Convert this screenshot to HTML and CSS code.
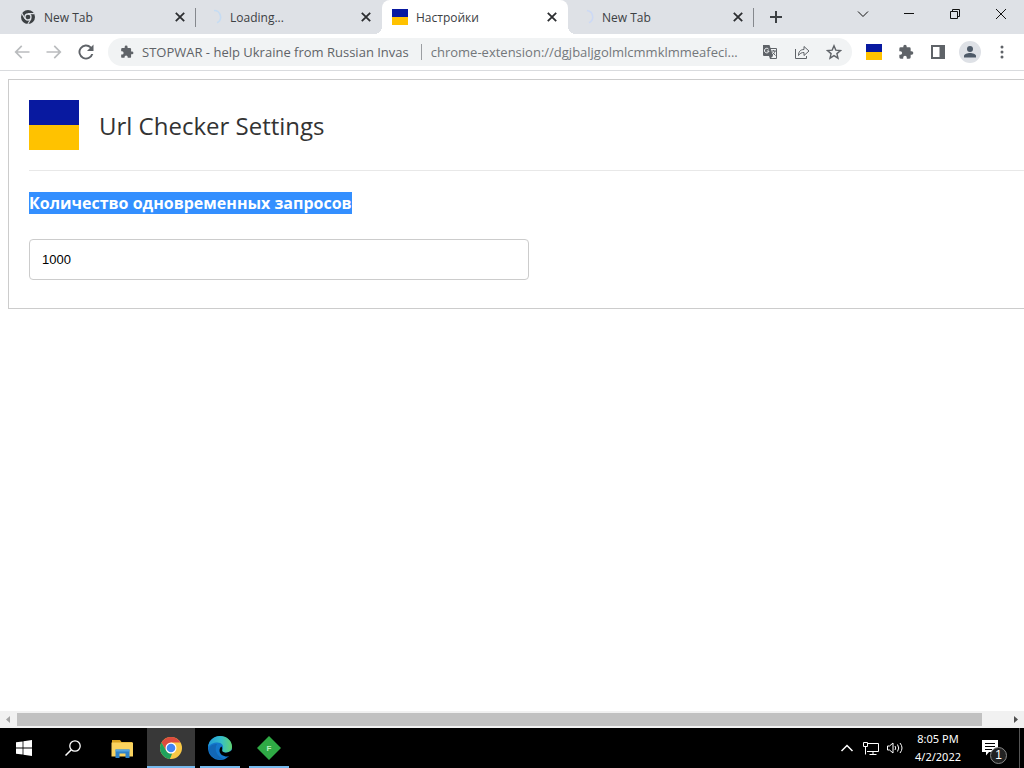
FILE: index.html
```html
<!DOCTYPE html>
<html lang="ru">
<head>
    <meta charset="utf-8">
    <title>Настройки</title>
    <link rel="stylesheet" href="styles.css">
</head>
<body>
    <header class="tabs">
        <div class="tab">
            <svg class="favicon" viewBox="0 0 16 16"><circle cx="8" cy="8" r="7" fill="#3c4043"/><circle cx="8" cy="8" r="3" fill="none" stroke="#dee1e6" stroke-width="1.3"/><path d="M8 4.6h6.4M5 9.6L1.8 4.2M11 9.7L7.8 15" stroke="#dee1e6" stroke-width="1.1"/></svg>
            <span class="tab-title">New Tab</span>
            <button class="close" aria-label="Close"><svg viewBox="0 0 10 10"><path d="M1.5 1.5l7 7M8.5 1.5l-7 7"/></svg></button>
        </div>
        <div class="tab">
            <svg class="favicon" viewBox="0 0 16 16"><path d="M8 1.5a6.5 6.5 0 0 1 3 12.3" fill="none" stroke="#c6dcf3" stroke-width="1.6"/></svg>
            <span class="tab-title">Loading...</span>
            <button class="close" aria-label="Close"><svg viewBox="0 0 10 10"><path d="M1.5 1.5l7 7M8.5 1.5l-7 7"/></svg></button>
        </div>
        <div class="tab active">
            <span class="flag flag-small"></span>
            <span class="tab-title">Настройки</span>
            <button class="close" aria-label="Close"><svg viewBox="0 0 10 10"><path d="M1.5 1.5l7 7M8.5 1.5l-7 7"/></svg></button>
        </div>
        <div class="tab">
            <svg class="favicon" viewBox="0 0 16 16"><path d="M9 1.5a6.5 6.5 0 0 1 2 12.3" fill="none" stroke="#ccd9f5" stroke-width="1.6"/></svg>
            <span class="tab-title">New Tab</span>
            <button class="close" aria-label="Close"><svg viewBox="0 0 10 10"><path d="M1.5 1.5l7 7M8.5 1.5l-7 7"/></svg></button>
        </div>
        <button class="new-tab" aria-label="New tab"><svg viewBox="0 0 14 14"><path d="M7 1v12M1 7h12" stroke="#3c4043" stroke-width="2"/></svg></button>
        <div class="window-buttons">
            <button aria-label="Search tabs"><svg viewBox="0 0 12 12"><path d="M1 3.5l5 5 5-5"/></svg></button>
            <button aria-label="Minimize"><svg viewBox="0 0 12 12"><path d="M1 5.5h10"/></svg></button>
            <button aria-label="Restore"><svg viewBox="0 0 12 12"><path d="M1.5 3.5h7v7h-7zM3.5 3.5v-2h7v7h-2"/></svg></button>
            <button aria-label="Close window"><svg viewBox="0 0 12 12"><path d="M1 1l10 10M11 1L1 11"/></svg></button>
        </div>
    </header>

    <nav class="toolbar">
        <button class="tool faded" aria-label="Back"><svg viewBox="0 0 24 24"><path d="M21 11H6.800l5.600-5.600L11 4l-8 8 8 8 1.400-1.400L6.800 13H21z"/></svg></button>
        <button class="tool faded" aria-label="Forward"><svg viewBox="0 0 24 24"><path d="M3 11h14.200l-5.600-5.600L13 4l8 8-8 8-1.400-1.400 5.600-5.600H3z"/></svg></button>
        <button class="tool" aria-label="Reload"><svg viewBox="0 0 24 24"><path d="M18.400 5.600A9 9 0 1 0 20.700 14.300h-2.400A6.700 6.700 0 1 1 16.700 7.300L13.200 10.800H21V3z"/></svg></button>
        <div class="omnibox">
            <svg class="icon puzzle" viewBox="0 0 24 24"><path d="M20.500 11H19V7a2 2 0 0 0-2-2h-4V3.500a2.500 2.500 0 0 0-5 0V5H4a2 2 0 0 0-2 2v3.800h1.500a2.700 2.700 0 0 1 0 5.400H2V20a2 2 0 0 0 2 2h3.800v-1.500a2.700 2.700 0 0 1 5.400 0V22H17a2 2 0 0 0 2-2v-4h1.500a2.500 2.500 0 0 0 0-5z"/></svg>
            <span class="site">STOPWAR - help Ukraine from Russian Invas</span>
            <input class="url" type="text" aria-label="Address" value="chrome-extension://dgjbaljgolmlcmmklmmeafeci...">
            <button class="tool" aria-label="Translate"><svg class="icon" viewBox="0 0 16 16"><path d="M1 1h6.500l1 3H14a1 1 0 0 1 1 1v9a1 1 0 0 1-1 1H8l-1-3H2a1 1 0 0 1-1-1z"/><path d="M8.800 5H14v9H9l2-2z" fill="#f1f3f4"/><path d="M9.500 7H14M11.600 6v1M13 7c-.5 2-1.500 3-3 4M10.500 8.500l3 3" fill="none" stroke="#5f6368"/><path d="M6.600 5.200A2.300 2.300 0 1 0 7 7H4.800" fill="none" stroke="#f1f3f4"/></svg></button>
            <button class="tool" aria-label="Share"><svg class="icon line" viewBox="0 0 16 16"><path d="M1.500 5v9.500h11V12M4.500 11.500c0-4 2-6 5.500-6V2.500L15 7l-5 4.500v-3c-2.500 0-4 .8-5.500 3z"/></svg></button>
            <button class="tool" aria-label="Bookmark"><svg class="icon line" viewBox="0 0 16 16"><path d="M8 1.800l1.800 4.300 4.700.4-3.600 3.100 1.100 4.600-4-2.500-4 2.500 1.100-4.600-3.600-3.100 4.700-.4z" stroke-width="1.400"/></svg></button>
        </div>
        <button class="tool" aria-label="Url Checker"><span class="flag flag-small"></span></button>
        <button class="tool" aria-label="Extensions"><svg class="puzzle" viewBox="0 0 24 24"><path d="M20.500 11H19V7a2 2 0 0 0-2-2h-4V3.500a2.500 2.500 0 0 0-5 0V5H4a2 2 0 0 0-2 2v3.800h1.500a2.700 2.700 0 0 1 0 5.400H2V20a2 2 0 0 0 2 2h3.800v-1.500a2.700 2.700 0 0 1 5.400 0V22H17a2 2 0 0 0 2-2v-4h1.500a2.500 2.500 0 0 0 0-5z"/></svg></button>
        <button class="tool" aria-label="Side panel"><svg class="panel" viewBox="0 0 16 16"><path d="M1 1h14v14H1zM3 3v10h6.500V3z" fill-rule="evenodd"/></svg></button>
        <button class="tool profile" aria-label="Profile"><svg viewBox="0 0 22 22"><circle cx="11" cy="11" r="11" fill="#dee1e6"/><circle cx="11" cy="8" r="3" fill="#4e5a68"/><path d="M5 16.500v-1.500c0-2 3.500-3 6-3s6 1 6 3v1.500z" fill="#4e5a68"/></svg></button>
        <button class="tool" aria-label="Menu"><svg class="dots" viewBox="0 0 16 16"><circle cx="8" cy="3" r="1.500"/><circle cx="8" cy="8" r="1.500"/><circle cx="8" cy="13" r="1.500"/></svg></button>
    </nav>

    <main class="viewport">
        <section class="settings">
            <div class="settings-header">
                <span class="flag flag-large"></span>
                <h1>Url Checker Settings</h1>
            </div>
            <form class="settings-form">
                <label for="requests"><span class="selected">Количество одновременных запросов</span></label>
                <input id="requests" type="text" value="1000">
            </form>
        </section>
    </main>

    <div class="scrollbar">
        <button class="scroll-arrow" aria-label="Scroll left"><svg viewBox="0 0 17 17"><path d="M10 5v7L6 8.500z" fill="#a3a3a3"/></svg></button>
        <div class="scroll-track"><div class="scroll-thumb"></div></div>
        <button class="scroll-arrow" aria-label="Scroll right"><svg viewBox="0 0 17 17"><path d="M7 5v7l4-3.500z" fill="#505050"/></svg></button>
    </div>

    <footer class="taskbar">
        <button class="app" aria-label="Start"><svg viewBox="0 0 16 16" class="start"><path d="M0 2.300l6.600-.9v6.200H0zM7.400 1.300L16 0v7.600H7.400zM0 8.400h6.600v6.200L0 13.700zM7.400 8.400H16V16l-8.600-1.300z" fill="#fff"/></svg></button>
        <button class="app" aria-label="Search"><svg viewBox="0 0 16 16" class="start"><circle cx="10" cy="6" r="5.200" fill="none" stroke="#fff" stroke-width="1.300"/><path d="M6.300 9.700L.5 15.500" stroke="#fff" stroke-width="1.500"/></svg></button>
        <button class="app" aria-label="File Explorer"><svg viewBox="0 0 24 24"><path d="M2 4h8l1.500 2H22v3H2z" fill="#d9a321"/><path d="M1.500 6.500H23v14h-21.500z" fill="#fad35f"/><path d="M5.500 13.500h14V22h-4v-4.500h-6V22h-4z" fill="#2f83c9"/><path d="M5.500 13.500h14v2h-14z" fill="#55a5df"/></svg></button>
        <button class="app current" aria-label="Chrome"><svg viewBox="0 0 24 24"><circle cx="12" cy="12" r="11" fill="#f9c845"/><path d="M2.500 6.500A11 11 0 0 1 21.500 6.500H12L7.200 14.700z" fill="#dd4b3e"/><path d="M2.500 6.500l4.700 8.200a5.500 5.500 0 0 0 6 2.600L11 23A11 11 0 0 1 2.500 6.500z" fill="#1fa15d"/><path d="M11.500 23l5.300-8.500" stroke="#f9c845"/><circle cx="12" cy="12" r="5.500" fill="#fff"/><circle cx="12" cy="12" r="4.300" fill="#4285f4"/></svg></button>
        <button class="app open" aria-label="Edge"><svg viewBox="0 0 24 24"><defs><linearGradient id="edge-top"><stop offset="0" stop-color="#239bd8"/><stop offset=".55" stop-color="#35bfc9"/><stop offset="1" stop-color="#62d36e"/></linearGradient></defs><circle cx="12" cy="12" r="12" fill="#1377cc"/><path d="M0 11C1 4 6 0 12 0c7 0 12 5 12 10.500 0 4-3 6-6.500 6-2.500 0-4.500-1-3-3 2-4-1-7-5-7-4 0-8 2-9.500 4.500z" fill="url(#edge-top)"/><path d="M9 8c-3 5-1 12 7 15.200C10 25 1 21 1 14c0-4 4-6 8-6z" fill="#1267b5"/><path d="M13.500 10.500c1.500 2 0 3.500 1 5 2 2 6 1.300 9.500-1.500v4l-1.500 2c-5 1.500-11-.5-11-5.500 0-2 1-3.500 2-4z" fill="#000"/></svg></button>
        <button class="app open" aria-label="F"><svg viewBox="0 0 24 24"><path d="M12 0l12 12-12 12L0 12z" fill="#2faa45"/><text x="12" y="15" text-anchor="middle" class="app-letter">F</text></svg></button>
        <div class="tray">
            <button aria-label="Hidden icons"><svg class="chevron" viewBox="0 0 16 16"><path d="M2.500 11L8 5.500l5.500 5.500"/></svg></button>
            <button aria-label="Network"><svg viewBox="0 0 16 16"><path d="M5 3.500h10.500v8H4M10 11.500v3M6.500 14.500h7M.5 2.500h4v4h-4zM2.500 6.500v8"/></svg></button>
            <button aria-label="Volume"><svg viewBox="0 0 16 16"><path d="M.5 6h2L6 3v10L2.500 10h-2zM8 6q1.500 2 0 4M10.500 4.500q2.500 3.500 0 7M13 3q4 5 0 10"/></svg></button>
        </div>
        <div class="clock"><time>8:05 PM</time><time>4/2/2022</time></div>
        <button class="notifications" aria-label="Notifications"><svg viewBox="0 0 16 16"><path d="M0 0h16v12H7l-3 3.500V12H0z" fill="#fff"/><path d="M3 3.500h10M3 6.500h10M3 9.500h7" stroke="#000"/></svg><span class="badge">1</span></button>
    </footer>
</body>
</html>
```

FILE: styles.css
```css
* {
    box-sizing: border-box;
}

body {
    margin: 0;
    height: 100vh;
    display: flex;
    flex-direction: column;
    overflow: hidden;
    font-family: "Open Sans", "Noto Sans", sans-serif;
    font-size: 12px;
    color: #3c4043;
    background: #fff;
}

button {
    display: flex;
    align-items: center;
    justify-content: center;
    padding: 0;
    border: none;
    background: none;
    flex: none;
}

svg {
    display: block;
    flex: none;
}

.tabs {
    display: flex;
    height: 34px;
    padding-left: 10px;
    background: #dee1e6;
}

.tab {
    display: flex;
    align-items: center;
    flex: 0 1 186px;
    min-width: 0;
    padding: 0 10px;
    position: relative;
}

.tab:not(.active)::after {
    content: "";
    position: absolute;
    right: 0;
    top: 8px;
    width: 1px;
    height: 19px;
    background: #85888d;
}

.tab:nth-child(2)::after {
    display: none;
}

.tab.active {
    background: #fff;
    border-radius: 8px 8px 0 0;
}

/* curved feet of the active tab */
.tab.active::before,
.tab.active::after {
    content: "";
    position: absolute;
    bottom: 0;
    width: 8px;
    height: 8px;
}

.tab.active::before {
    left: -8px;
    background: radial-gradient(circle at 0 0, #dee1e6 8px, #fff 8px);
}

.tab.active::after {
    right: -8px;
    background: radial-gradient(circle at 100% 0, #dee1e6 8px, #fff 8px);
}

.favicon {
    width: 16px;
    height: 16px;
}

.tab-title {
    flex: 1;
    margin-left: 8px;
    white-space: nowrap;
    overflow: hidden;
}

.close svg {
    width: 12px;
    height: 12px;
    stroke: #2c2e31;
    stroke-width: 1.5;
}

.new-tab {
    width: 44px;
}

.new-tab svg {
    width: 14px;
    height: 14px;
}

.window-buttons {
    display: flex;
    margin-left: auto;
}

.window-buttons button {
    width: 46px;
    height: 28px;
}

.window-buttons svg {
    width: 12px;
    height: 12px;
    fill: none;
    stroke: #111;
}

.flag {
    display: block;
    flex: none;
    background: linear-gradient(#0819a0 50%, #ffc200 50%);
}

.flag-small {
    width: 16px;
    height: 16px;
}

.flag-large {
    width: 50px;
    height: 50px;
}

.toolbar {
    display: flex;
    align-items: center;
    height: 37px;
    padding: 0 6px;
    border-bottom: 1px solid #d9dbde;
}

.tool {
    width: 32px;
    height: 28px;
}

.tool svg {
    width: 20px;
    height: 20px;
    fill: #5f6368;
}

.tool.faded svg {
    fill: #babcbe;
}

.tool .puzzle,
.tool .panel,
.tool .dots {
    width: 16px;
    height: 16px;
}

.tool.profile svg {
    width: 22px;
    height: 22px;
}

.omnibox {
    display: flex;
    align-items: center;
    flex: 1;
    min-width: 0;
    height: 28px;
    margin: 0 6px;
    padding: 0 2px 0 12px;
    border-radius: 14px;
    background: #f1f3f4;
    font-size: 13px;
    color: #5f6368;
}

.omnibox .icon {
    width: 16px;
    height: 16px;
    fill: #5f6368;
}

.omnibox .puzzle {
    width: 14px;
    height: 14px;
}

.omnibox .line {
    fill: none;
    stroke: #5f6368;
}

.site {
    margin-left: 8px;
    padding-right: 12px;
    border-right: 1px solid #9b9ea2;
    line-height: 16px;
    white-space: nowrap;
}

.url {
    flex: 1;
    min-width: 0;
    height: 18px;
    padding: 0 0 0 9px;
    border: none;
    background: none;
    font: inherit;
    line-height: 16px;
    color: #73777b;
}

.viewport {
    flex: 1;
    min-height: 0;
    overflow: hidden;
}

.settings {
    margin: 8px -26px 0 8px;
    padding: 20px;
    border: 1px solid #ccc;
}

.settings-header {
    display: flex;
    align-items: center;
    gap: 20px;
    padding-bottom: 20px;
    border-bottom: 1px solid #e8e8e8;
}

h1 {
    margin: 0;
    font-size: 24px;
    font-weight: 400;
    color: #333;
}

.settings-form {
    padding: 20px 0 8px;
}

label {
    display: block;
    margin-bottom: 24px;
    font-size: 16px;
    line-height: 24px;
    font-weight: 700;
}

.selected {
    background: #338fff;
    color: #fff;
}

#requests {
    display: block;
    width: 500px;
    height: 41px;
    padding: 0 12px;
    border: 1px solid #ccc;
    border-radius: 4px;
    font-family: "Liberation Sans", Arial, sans-serif;
    font-size: 13px;
    color: #000;
}

.scrollbar {
    display: flex;
    height: 17px;
    background: #f1f1f1;
}

.scroll-arrow,
.scroll-arrow svg {
    width: 17px;
    height: 17px;
}

.scroll-track {
    flex: 1;
    padding: 2px 0;
}

.scroll-thumb {
    width: 97.5%;
    height: 13px;
    background: #c1c1c1;
}

.taskbar {
    display: flex;
    height: 40px;
    padding-right: 4px;
    background: #000;
    color: #fff;
}

.app {
    width: 48px;
    margin-right: 1px;
    border-bottom: 2px solid transparent;
    border-top: 2px solid transparent;
}

.app svg {
    width: 24px;
    height: 24px;
}

.app .start {
    width: 16px;
    height: 16px;
}

.app.current {
    background: #383838;
    border-top-color: #383838;
    border-bottom-color: #76b9ed;
}

.app.open {
    background: linear-gradient(#76b9ed, #76b9ed) center bottom / 40px 2px no-repeat border-box;
}

.app-letter {
    font-size: 8px;
    font-weight: 700;
    fill: #b7f0bd;
}

.tray {
    display: flex;
    margin-left: auto;
}

.tray button {
    width: 24px;
}

.tray svg {
    width: 16px;
    height: 16px;
    fill: none;
    stroke: #fff;
}

.tray .chevron {
    stroke-width: 1.5;
}

.clock {
    display: flex;
    flex-direction: column;
    justify-content: center;
    align-items: center;
    width: 62px;
    font-family: "Noto Sans", sans-serif;
    font-size: 11px;
    line-height: 18px;
}

.notifications {
    width: 51px;
    padding-right: 8px;
    position: relative;
    border-right: 1px solid #555;
}

.notifications svg {
    width: 16px;
    height: 16px;
}

.badge {
    position: absolute;
    right: 12px;
    bottom: 4px;
    width: 17px;
    height: 17px;
    border: 1px solid #888;
    border-radius: 50%;
    background: #222;
    color: #fff;
    font-size: 12px;
    line-height: 15px;
}
```
